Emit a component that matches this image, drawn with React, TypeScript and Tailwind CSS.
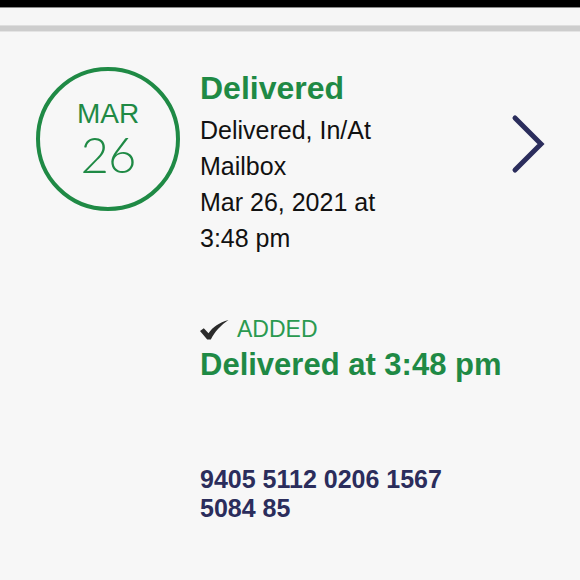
export default function App() {
  return (
    <div
      className="w-[580px] h-[580px] overflow-hidden bg-[#f7f7f7] flex flex-col"
      style={{ fontFamily: '"Liberation Sans", Arial, sans-serif' }}
    >
      <div className="h-[7px] bg-black" />
      <div className="h-px bg-[#8a8a8a]" />
      <div className="h-[17px] bg-[#f6f6f6]" />
      <div className="h-px bg-[#dedede]" />
      <div className="h-[5px] bg-[#cdcdcd]" />
      <div className="h-px bg-[#e4e4e4]" />
      <div className="flex flex-row items-start pt-[35px]">
        <div className="ml-[36px] w-[144px] h-[144px] shrink-0 rounded-full border-4 border-[#1f8a45] flex flex-col items-center justify-center">
          <div className="text-[28px] leading-[32px] text-[#1f8a45] mt-[-2px]">MAR</div>
          <div
            className="text-[49px] leading-[48px] text-[#1f8a45] tracking-[-1px]"
            style={{ fontFamily: 'Lato, "Liberation Sans", sans-serif', fontWeight: 300 }}
          >
            26
          </div>
        </div>
        <div className="ml-[20px] flex flex-col pt-[3px]">
          <div className="text-[32px] leading-[36px] font-bold text-[#1f8a45]">Delivered</div>
          <div className="mt-[6px] text-[25px] leading-[36px] text-[#111]">
            <div>Delivered, In/At</div>
            <div>Mailbox</div>
            <div>Mar 26, 2021 at</div>
            <div>3:48 pm</div>
          </div>
          <div className="mt-[59px] flex flex-row items-center text-[23px] leading-[28px]">
            <svg width="29" height="20" viewBox="0 0 29 20" className="mr-[8px] mt-[2px]">
              <path
                d="M0 11 L3.8 8.2 L8.5 13.2 C13 7 19 2.5 28.5 0 C21 5 14.5 12 10.8 19.5 L7.2 19.5 Z"
                fill="#2b2b2b"
              />
            </svg>
            <span className="text-[#2a9a50]">ADDED</span>
          </div>
          <div className="mt-[4px] text-[31px] leading-[36px] font-bold text-[#1f8a45]">
            Delivered at 3:48 pm
          </div>
          <div className="mt-[82px] text-[25px] leading-[29px] font-bold text-[#2b2d5c]">
            <div>9405 5112 0206 1567</div>
            <div>5084 85</div>
          </div>
        </div>
        <div className="flex-1 flex justify-end pr-[34px] pt-[46px]">
          <svg width="40" height="64" viewBox="0 0 40 64" fill="none">
            <path d="M9 5 L35 31 L9 57" stroke="#2b2d5c" strokeWidth="5" strokeLinecap="round" strokeLinejoin="miter" />
          </svg>
        </div>
      </div>
    </div>
  );
}
